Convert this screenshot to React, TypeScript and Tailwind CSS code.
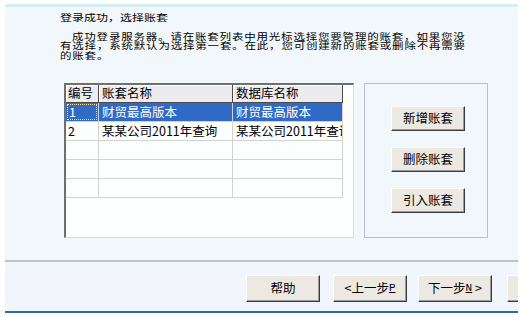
import React from "react";

const rows = [
  { no: "1", name: "财贸最高版本", db: "财贸最高版本" },
  { no: "2", name: "某某公司2011年查询", db: "某某公司2011年查询" },
  { no: "", name: "", db: "" },
  { no: "", name: "", db: "" },
  { no: "", name: "", db: "" },
];

function Btn({ children, className = "" }: { children?: React.ReactNode; className?: string }) {
  return (
    <div
      className={`flex items-center justify-center shrink-0 bg-[#ece9e3] border border-t-white border-l-white border-r-[#3c3c3c] border-b-[#3c3c3c] shadow-[inset_-1px_-1px_0_#9a9a9a] text-[12.5px] leading-none text-black whitespace-nowrap ${className}`}
    >
      {children}
    </div>
  );
}

export default function App() {
  return (
    <div className="w-[532px] h-[317px] bg-white pt-[4px] pl-[5px] font-['Noto_Sans_CJK_SC',sans-serif] text-black">
      <div className="w-[513px] h-[309px] flex flex-col overflow-hidden">
        {/* top band */}
        <div className="h-[3px] bg-[#d6eff3]" />

        {/* upper part */}
        <div className="h-[253px] bg-[#f2f7fb] pl-[55px] pt-[5px]">
          <div className="h-[10px]">
            <p className="text-[12px] leading-[12px] origin-top-left scale-y-[0.78] whitespace-nowrap">
              登录成功，选择账套
            </p>
          </div>
          <div className="h-[29px] mt-[9px]">
            <p className="text-[11.5px] leading-[12px] tracking-[0.8px] origin-top-left scale-y-[0.8] whitespace-nowrap">
              <span className="pl-[12px]">成功登录服务器。请在账套列表中用光标选择您要管理的账套，如果您没</span>
              <br />
              有选择，系统默认为选择第一套。在此，您可创建新的账套或删除不再需要
              <br />
              的账套。
            </p>
          </div>

          <div className="flex mt-[23px] ml-[4px] gap-[10px]">
            {/* account list */}
            <div className="w-[290px] h-[155px] bg-[#fdfefe] border-t-2 border-l-2 border-t-[#6f6f6f] border-l-[#6f6f6f] border-r border-b border-r-[#dcdcdc] border-b-[#dcdcdc]">
              <div className="w-[277px] text-[12.5px] leading-none">
                <div className="flex h-[18px] bg-[#ecebef]">
                  <div className="w-[33px] flex items-center pl-[2px] border-r border-b border-[#4a4a4a] shadow-[inset_1px_1px_0_#fff]">编号</div>
                  <div className="w-[134px] flex items-center pl-[3px] border-r border-b border-[#4a4a4a] shadow-[inset_1px_1px_0_#fff]">账套名称</div>
                  <div className="w-[110px] flex items-center pl-[3px] border-r border-b border-[#4a4a4a] shadow-[inset_1px_1px_0_#fff]">数据库名称</div>
                </div>
                {rows.map((r, i) => {
                  const sel = i === 0;
                  return (
                    <div key={i} className={`flex h-[19px] ${sel ? "bg-[#316ac5] text-white" : ""}`}>
                      <div className="w-[33px] border-r border-b border-[#d2d2d2] p-px">
                        <div className={`h-full flex items-center pl-px ${sel ? "border border-dotted border-[#e8e2a8]" : ""}`}>{r.no}</div>
                      </div>
                      <div className="w-[134px] flex items-center pl-[3px] border-r border-b border-[#d2d2d2] whitespace-nowrap overflow-hidden">{r.name}</div>
                      <div className="w-[110px] flex items-center pl-[3px] border-r border-b border-[#d2d2d2] whitespace-nowrap overflow-hidden">{r.db}</div>
                    </div>
                  );
                })}
              </div>
            </div>

            {/* action buttons */}
            <div className="w-[124px] h-[155px] border border-[#b8bfc6] flex flex-col items-start pl-[26px] pt-[22px] gap-[16px]">
              <Btn className="w-[74px] h-[25px]">新增账套</Btn>
              <Btn className="w-[74px] h-[25px]">删除账套</Btn>
              <Btn className="w-[74px] h-[25px]">引入账套</Btn>
            </div>
          </div>
        </div>

        {/* separator */}
        <div className="h-[2px] bg-[#bcc4c9]" />

        {/* lower part */}
        <div className="h-[49px] bg-[#f2f6fc] flex items-start pt-[13px] pl-[241px]">
          <Btn className="w-[74px] h-[27px]">帮助</Btn>
          <Btn className="w-[74px] h-[27px] ml-[13px]">
            &lt;上一步<span className="underline font-['Liberation_Mono',monospace] text-[11px]">P</span>
          </Btn>
          <Btn className="w-[74px] h-[27px] ml-[11px]">
            下一步<span className="underline font-['Liberation_Mono',monospace] text-[11px]">N</span>&nbsp;&gt;
          </Btn>
          <Btn className="w-[74px] h-[27px] ml-[15px]" />
        </div>

        {/* bottom line */}
        <div className="h-[2px] bg-[#2c6b9a]" />
      </div>
    </div>
  );
}
